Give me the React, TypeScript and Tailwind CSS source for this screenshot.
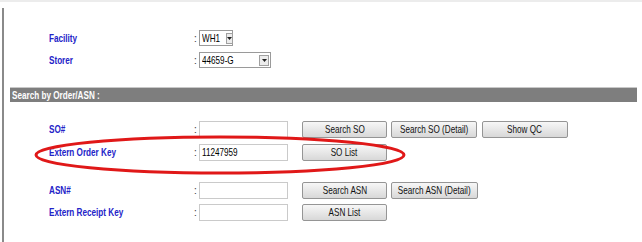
const sans = "font-['Liberation_Sans',Arial,sans-serif]";

function Squish({ children, center = false }: { children: React.ReactNode; center?: boolean }) {
  return (
    <span
      className={`inline-block shrink-0 whitespace-nowrap scale-x-[0.74] ${center ? "origin-center" : "origin-left"}`}
    >
      {children}
    </span>
  );
}

function Label({ children }: { children: React.ReactNode }) {
  return (
    <div className={`w-[145px] shrink-0 text-[11px] font-bold text-[#2323c8] ${sans}`}>
      <Squish>{children}</Squish>
    </div>
  );
}

function Colon() {
  return <div className={`w-[5px] shrink-0 text-[10px] text-[#333] ${sans}`}>:</div>;
}

function TextBox({ value = "" }: { value?: string }) {
  return (
    <div
      className={`flex h-[17px] w-[89px] shrink-0 items-center border border-[#cacaca] bg-white px-[2px] text-[11px] text-black ${sans}`}
    >
      <Squish>{value}</Squish>
    </div>
  );
}

function Btn({ label, className = "" }: { label: string; className?: string }) {
  return (
    <button
      className={`flex h-[17px] shrink-0 items-center justify-center rounded-[2px] border border-[#959595] bg-gradient-to-b from-[#f7f7f7] to-[#d8d8d8] text-[11px] text-[#111] ${sans} ${className}`}
    >
      <Squish center>{label}</Squish>
    </button>
  );
}

function Select({ value, width }: { value: string; width: string }) {
  return (
    <div className={`flex h-[16px] items-center justify-between border border-[#9a9a9a] bg-white pl-[2px] pr-[1px] ${width}`}>
      <span className={`text-[11px] text-black ${sans}`}>
        <Squish>{value}</Squish>
      </span>
      <span className="flex h-[11px] w-[10px] items-center justify-center border border-[#a0a0a0] bg-[#ececec]">
        <svg width="5" height="3" viewBox="0 0 5 3">
          <path d="M0 0h5L2.5 3z" fill="#222" />
        </svg>
      </span>
    </div>
  );
}

function Row({ label, children }: { label: string; children: React.ReactNode }) {
  return (
    <div className="flex h-[17px] items-center pl-[45px]">
      <Label>{label}</Label>
      <Colon />
      <div className="flex items-center">{children}</div>
    </div>
  );
}

export default function App() {
  return (
    <div className="relative h-[242px] w-[642px] overflow-hidden bg-white">
      <div className="h-[2px] w-full bg-[#ececec]" />
      <div className="ml-[2px] mt-[6px] h-[234px] border-l-2 border-[#8a8a8a]">
        <div className="flex flex-col gap-[6px] pt-[22px]">
          <div className="flex h-[16px] items-center pl-[45px]">
            <Label>Facility</Label>
            <Colon />
            <Select value="WH1" width="w-[34px]" />
          </div>
          <div className="flex h-[16px] items-center pl-[45px]">
            <Label>Storer</Label>
            <Colon />
            <Select value="44659-G" width="w-[72px]" />
          </div>
        </div>
        <div
          className={`ml-[6px] mr-[5px] mt-[19px] flex h-[15px] items-center border-t border-[#c8c8c8] bg-[#7e7e7e] pl-[2px] text-[11px] font-bold text-white ${sans}`}
        >
          <Squish>Search by Order/ASN :</Squish>
        </div>
        <div className="mt-[19px] flex flex-col gap-[6px]">
          <Row label="SO#">
            <TextBox />
            <Btn label="Search SO" className="ml-[14px] w-[85px]" />
            <Btn label="Search SO (Detail)" className="ml-[4px] w-[86px]" />
            <Btn label="Show QC" className="ml-[5px] w-[86px]" />
          </Row>
          <Row label="Extern Order Key">
            <TextBox value="11247959" />
            <Btn label="SO List" className="ml-[14px] w-[85px]" />
          </Row>
        </div>
        <div className="mt-[21px] flex flex-col gap-[5px]">
          <Row label="ASN#">
            <TextBox />
            <Btn label="Search ASN" className="ml-[14px] w-[85px]" />
            <Btn label="Search ASN (Detail)" className="ml-[4px] w-[87px]" />
          </Row>
          <Row label="Extern Receipt Key">
            <TextBox />
            <Btn label="ASN List" className="ml-[14px] w-[85px]" />
          </Row>
        </div>
      </div>
      {/* red annotation ellipse drawn over the form */}
      <svg className="pointer-events-none absolute left-0 top-0" width="642" height="242">
        <ellipse cx="220" cy="155" rx="184" ry="18" fill="none" stroke="#e01818" strokeWidth="3" />
      </svg>
    </div>
  );
}
